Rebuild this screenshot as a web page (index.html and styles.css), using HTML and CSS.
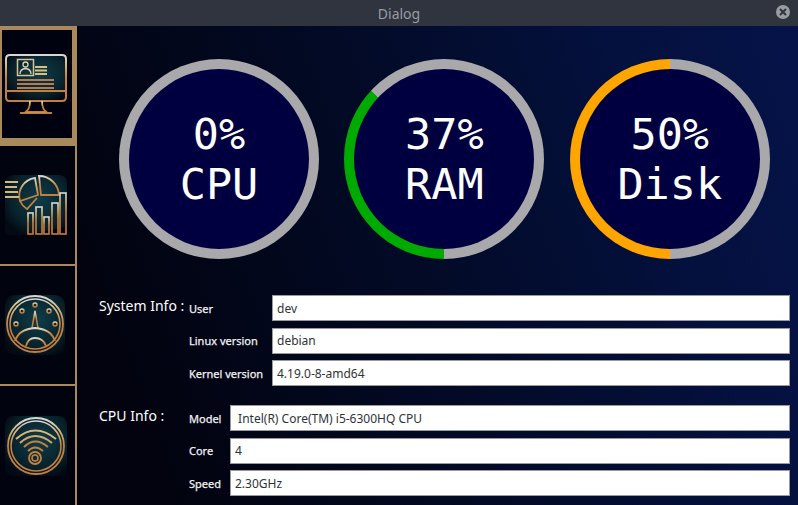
FILE: index.html
```html
<!DOCTYPE html>
<html lang="en">
<head>
<meta charset="UTF-8">
<title>Dialog</title>
<link rel="stylesheet" href="styles.css">
</head>
<body>

<svg class="defs" width="0" height="0">
    <defs>
        <linearGradient id="metal" x1="0" y1="0" x2="0" y2="1">
            <stop offset="0" stop-color="#d8d8d8"/>
            <stop offset="0.22" stop-color="#d8b67c"/>
            <stop offset="0.5" stop-color="#c4803f"/>
            <stop offset="1" stop-color="#c47f3e"/>
        </linearGradient>
        <radialGradient id="teal" cx="0.55" cy="0.4" r="0.65">
            <stop offset="0" stop-color="#0e3d48"/>
            <stop offset="0.7" stop-color="#08222c"/>
            <stop offset="1" stop-color="#030a14"/>
        </radialGradient>
    </defs>
</svg>

<div class="titlebar">
    <span class="title">Dialog</span>
    <span class="close">
        <svg width="8" height="8" viewBox="0 0 8 8"><path d="M1 1L7 7M7 1L1 7" stroke="#2f343f" stroke-width="2"/></svg>
    </span>
</div>

<div class="window">
    <nav class="sidebar">
        <div class="tab tab-active">
            <!-- monitor -->
            <svg class="icon" viewBox="0 0 62 60" fill="none" stroke="url(#metal)">
                <path d="M4 47H57Q61 47 61 43V5Q61 1 57 1H5Q1 1 1 5V43Q1 47 4 47Z" fill="url(#teal)" stroke-width="2"/>
                <path d="M1 37H61" stroke="#c4803f" stroke-width="1.8"/>
                <path d="M25 47Q25 56 20 58H42Q37 56 37 47" stroke-width="1.8"/>
                <path d="M15 59H47" stroke="#d09048" stroke-width="1.8"/>
                <rect x="12.500" y="5.500" width="16" height="16" stroke="#d8c49a" stroke-width="1.5"/>
                <circle cx="20.500" cy="10.500" r="2.500" stroke="#e0d0b0" stroke-width="1.3"/>
                <path d="M15 20Q15 15 20.500 14.500Q26 15 26 20" stroke="#e0d0b0" stroke-width="1.3"/>
                <path d="M30 13H42M30 16.500H42M30 20H42" stroke="#d8c080" stroke-width="1.8"/>
                <path d="M12 26H49M12 30H49M12 34H49" stroke="#b87a50" stroke-width="2"/>
            </svg>
        </div>
        <div class="tab">
            <!-- pie and bars -->
            <svg class="icon" viewBox="0 0 62 60" fill="none" stroke="url(#metal)">
                <path d="M8 0H54Q62 0 62 8V52L20 60H0V8Q0 0 8 0Z" fill="url(#teal)" stroke="none"/>
                <path d="M34 1A20 20 0 0 1 54 20L36 20Z" stroke-width="1.8"/>
                <path d="M30 3A18 18 0 0 0 15 26L33 20ZM15 26A18 18 0 0 0 22 34L32 23" stroke-width="1.8"/>
                <path d="M0 7H13M0 12H12M0 17H13M0 22H14" stroke="#d8b67c" stroke-width="2"/>
                <rect x="23" y="38" width="5" height="21" stroke-width="1.6"/>
                <rect x="31" y="32" width="6" height="27" stroke-width="1.6"/>
                <rect x="39" y="42" width="5" height="17" stroke-width="1.6"/>
                <rect x="47" y="28" width="6" height="31" stroke-width="1.6"/>
                <rect x="55" y="18" width="6" height="41" stroke-width="1.6"/>
            </svg>
        </div>
        <div class="tab">
            <!-- gauge -->
            <svg class="icon" viewBox="0 0 62 60" fill="none" stroke="url(#metal)">
                <rect x="0" y="0" width="60" height="60" rx="10" fill="url(#teal)" stroke="none"/>
                <circle cx="30" cy="29" r="28" stroke-width="1.8"/>
                <circle cx="30" cy="29" r="25" stroke-width="1.6"/>
                <circle cx="17" cy="16" r="2" stroke-width="1.5"/>
                <circle cx="30" cy="10" r="2" stroke-width="1.5"/>
                <circle cx="44" cy="16" r="2" stroke-width="1.5"/>
                <circle cx="11" cy="29" r="2" stroke-width="1.5"/>
                <circle cx="50" cy="29" r="2" stroke-width="1.5"/>
                <path d="M30 16L27 33H33Z" stroke-width="1.5"/>
                <path d="M10 46Q14 34 30 33Q46 34 50 46" stroke-width="1.8"/>
                <path d="M21 51Q23 43 30 43Q38 43 41 51" stroke-width="1.8"/>
            </svg>
        </div>
        <div class="tab">
            <!-- wifi -->
            <svg class="icon" viewBox="0 0 62 60" fill="none" stroke="url(#metal)">
                <rect x="0" y="0" width="62" height="60" rx="8" fill="url(#teal)" stroke="none"/>
                <circle cx="31" cy="30" r="28" stroke-width="1.8"/>
                <circle cx="31" cy="30" r="25" stroke-width="1.6"/>
                <path d="M11 23Q30 6 51 23" stroke="#d8b67c" stroke-width="2"/>
                <path d="M15 27Q30 13 47 27" stroke="#d8a868" stroke-width="2"/>
                <path d="M19 31Q30 20 43 31" stroke="#c4803f" stroke-width="2"/>
                <path d="M23 35Q30 28 38 35" stroke="#c4803f" stroke-width="2"/>
                <circle cx="30" cy="42" r="6" stroke="#c4803f" stroke-width="1.8"/>
                <circle cx="30" cy="42" r="3" stroke="#c4803f" stroke-width="1.6"/>
            </svg>
        </div>
    </nav>

    <main class="content">
        <div class="gauges">
            <div class="gauge gauge-green" style="--pct: 0%">
                <div class="gauge-inner">0%<br>CPU</div>
            </div>
            <div class="gauge gauge-green" style="--pct: 37%">
                <div class="gauge-inner">37%<br>RAM</div>
            </div>
            <div class="gauge gauge-orange" style="--pct: 50%">
                <div class="gauge-inner">50%<br>Disk</div>
            </div>
        </div>

        <section class="info info-system">
            <h3>System Info :</h3>
            <label>User</label>
            <input type="text" value="dev">
            <label>Linux version</label>
            <input type="text" value="debian">
            <label>Kernel version</label>
            <input type="text" value="4.19.0-8-amd64">
        </section>

        <section class="info info-cpu">
            <h3>CPU Info :</h3>
            <label>Model</label>
            <input type="text" value=" Intel(R) Core(TM) i5-6300HQ CPU">
            <label>Core</label>
            <input type="text" value="4">
            <label>Speed</label>
            <input type="text" value="2.30GHz">
        </section>
    </main>
</div>

</body>
</html>
```

FILE: styles.css
```css
html, body {
    margin: 0;
    height: 505px;
    overflow: hidden;
}
body {
    font-family: "Noto Sans", sans-serif;
    background-color: #02040f;
}
.defs {
    display: block;
    height: 0;
}
.titlebar {
    height: 26px;
    background-color: #2f343f;
    display: flex;
    align-items: center;
    justify-content: center;
    position: relative;
}
.title {
    color: #979ba3;
    font-size: 14px;
}
.close {
    position: absolute;
    right: 8px;
    top: 5px;
    width: 14px;
    height: 14px;
    border-radius: 50%;
    background-color: #9a9ca3;
    display: flex;
    align-items: center;
    justify-content: center;
}
.window {
    display: flex;
    height: 479px;
    background: linear-gradient(70deg, #02030f 18%, #020a26 52%, #04103c 78%, #051349 100%);
}

/* Coluna de abas */
.sidebar {
    width: 77px;
    flex-shrink: 0;
    background-color: #01030e;
    display: flex;
    flex-direction: column;
}
.tab {
    height: 120px;
    flex-shrink: 0;
    box-sizing: border-box;
    border-right: 2px solid #a98a5c;
    border-bottom: 2px solid #a98a5c;
    display: flex;
    align-items: center;
    padding-left: 5px;
}
.tab:last-child {
    border-bottom: none;
}
.tab-active {
    border-top: 4px solid #a98a5c;
    border-left: 2px solid #a98a5c;
    border-right: 5px solid #a98a5c;
    border-bottom: 8px solid #a98a5c;
    padding-left: 3px;
    background-color: #00030f;
}
.icon {
    width: 62px;
    height: 60px;
    display: block;
}

/* Medidores */
.content {
    flex: 1;
    min-width: 0;
}
.gauges {
    display: flex;
    gap: 25.4px;
    padding: 33px 0 0 42px;
}
.gauge {
    width: 200px;
    height: 200px;
    box-sizing: border-box;
    padding: 10px;
    border-radius: 50%;
    background: conic-gradient(from 180deg, var(--arc) var(--pct), #a9a9ab var(--pct));
}
.gauge-green {
    --arc: #00aa00;
}
.gauge-orange {
    --arc: #ffa500;
}
.gauge-inner {
    height: 100%;
    border-radius: 50%;
    background-color: #000040;
    color: #fff;
    font-family: "DejaVu Sans Mono", monospace;
    font-size: 43.5px;
    line-height: 50px;
    text-align: center;
    display: flex;
    align-items: center;
    justify-content: center;
}

/* Blocos de informacao */
.info {
    display: grid;
    row-gap: 6.5px;
    padding: 0 8px 0 22px;
    align-items: center;
}
.info-system {
    grid-template-columns: 90px 83px 1fr;
    margin-top: 36px;
}
.info-cpu {
    grid-template-columns: 90px 41px 1fr;
    margin-top: 19px;
}
.info h3 {
    grid-row: 1 / span 3;
    align-self: start;
    margin: 1px 0 0;
    color: #fff;
    font-size: 14px;
    font-weight: 400;
    line-height: 20px;
    white-space: nowrap;
}
.info label {
    grid-column: 2;
    color: #f2f2f2;
    font-size: 11px;
    -webkit-text-stroke: 0.25px #f2f2f2;
    white-space: nowrap;
}
.info input {
    grid-column: 3;
    width: 100%;
    height: 26px;
    box-sizing: border-box;
    margin: 0;
    padding: 0 4px;
    border: 1px solid #9a9a9a;
    border-radius: 0;
    background-color: #fff;
    color: #2e3436;
    font-family: "Noto Sans", sans-serif;
    font-size: 12px;
}
```
